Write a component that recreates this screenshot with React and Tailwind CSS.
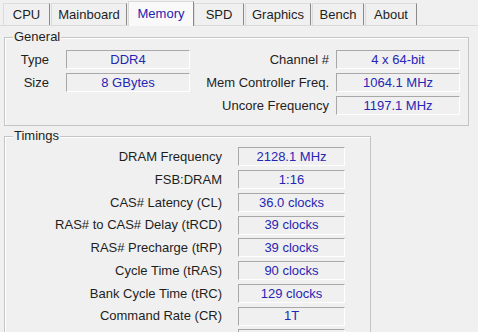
const tabs = [
  { name: "CPU", w: "w-[47px]" },
  { name: "Mainboard", w: "w-[76px]" },
  { name: "Memory", w: "w-[66px]", active: true },
  { name: "SPD", w: "w-[50px]" },
  { name: "Graphics", w: "w-[66px]" },
  { name: "Bench", w: "w-[52px]" },
  { name: "About", w: "w-[52px]" },
];

const timings = [
  ["DRAM Frequency", "2128.1 MHz"],
  ["FSB:DRAM", "1:16"],
  ["CAS# Latency (CL)", "36.0 clocks"],
  ["RAS# to CAS# Delay (tRCD)", "39 clocks"],
  ["RAS# Precharge (tRP)", "39 clocks"],
  ["Cycle Time (tRAS)", "90 clocks"],
  ["Bank Cycle Time (tRC)", "129 clocks"],
  ["Command Rate (CR)", "1T"],
  ["DRAM Idle Timer", "", true],
];

function Field({ children, className }) {
  return (
    <div
      className={`flex h-[19px] items-center justify-center border border-t-[#a8a8a8] border-l-[#a8a8a8] border-b-white border-r-white bg-[#f0f0f0] text-[#2626b4] ${className}`}
    >
      {children}
    </div>
  );
}

function Group({ title, className, children }) {
  return (
    <div className={`relative border border-[#c4c4c4] shadow-[inset_1px_1px_0_white] ${className}`}>
      <span className="absolute -top-[9px] left-[8px] bg-[#f0f0f0] px-[1px] leading-[16px] text-[#1e1e1e]">
        {title}
      </span>
      {children}
    </div>
  );
}

export default function App() {
  return (
    <div
      className="h-[332px] w-[478px] overflow-hidden bg-[#f0f0f0] text-[13px] text-[#1e1e1e]"
      style={{ fontFamily: '"Liberation Sans", Arial, sans-serif' }}
    >
      {/* tab strip */}
      <div className="flex h-[26px] items-end border-b border-[#d9d9d9] pl-[3px]">
        {tabs.map((t) =>
          t.active ? (
            <div
              key={t.name}
              className={`${t.w} -mb-px flex h-[25px] items-center justify-center border border-b-0 border-[#d9d9d9] border-r-[#8a8a8a] bg-[#f9f9f9] pb-[1px] text-[#2323b0]`}
            >
              {t.name}
            </div>
          ) : (
            <div
              key={t.name}
              className={`${t.w} mr-[1px] flex h-[22px] items-center justify-center border border-b-0 border-[#dcdcdc] border-r-[#8a8a8a] bg-[#f0f0f0]`}
            >
              {t.name}
            </div>
          )
        )}
      </div>

      <div className="px-[4px] pt-[11px]">
        <Group title="General" className="h-[89px] w-[465px]">
          <div className="grid grid-cols-[52px_124px_146px_124px] items-center gap-y-[3.5px] pl-[9px] pt-[12px]">
            <div className="pr-[17px] text-right">Type</div>
            <Field>DDR4</Field>
            <div className="pr-[7px] text-right">Channel #</div>
            <Field>4 x 64-bit</Field>
            <div className="pr-[17px] text-right">Size</div>
            <Field>8 GBytes</Field>
            <div className="pr-[7px] text-right">Mem Controller Freq.</div>
            <Field>1064.1 MHz</Field>
            <div />
            <div />
            <div className="pr-[7px] text-right">Uncore Frequency</div>
            <Field>1197.1 MHz</Field>
          </div>
        </Group>

        <Group title="Timings" className="mt-[10px] h-[220px] w-[367px]">
          <div className="flex flex-col gap-[3.25px] pt-[10px]">
            {timings.map(([label, value, off]) => (
              <div key={label} className="flex items-center">
                <div className={`w-[217px] text-right ${off ? "text-[#a0a0a0]" : ""}`}>
                  {label}
                </div>
                <Field className="ml-[16px] w-[107px]">{value}</Field>
              </div>
            ))}
          </div>
        </Group>
      </div>
    </div>
  );
}
